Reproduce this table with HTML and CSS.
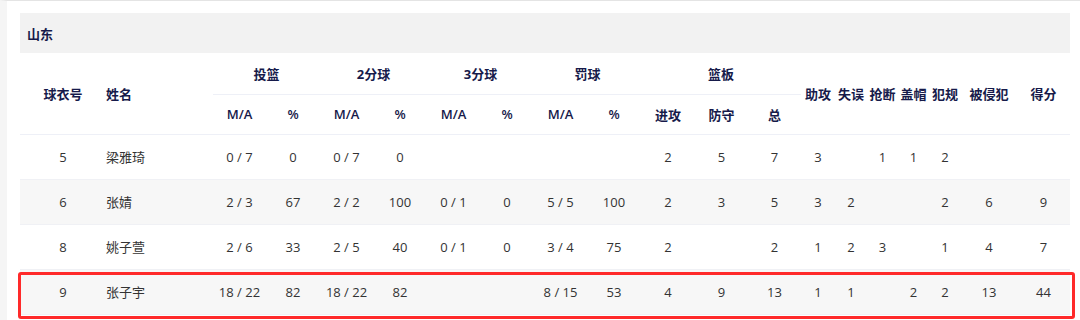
FILE: index.html
```html
<!DOCTYPE html>
<html lang="zh-CN">
<head>
<meta charset="utf-8">
<link rel="stylesheet" href="styles.css">
</head>
<body>
<div class="page">
  <div class="panel">
    <div class="team">山东</div>
    <table class="stats">
      <colgroup>
        <col style="width:86px"><col style="width:107px">
        <col style="width:53px"><col style="width:54px">
        <col style="width:53px"><col style="width:54px">
        <col style="width:53px"><col style="width:54px">
        <col style="width:53px"><col style="width:54px">
        <col style="width:54px"><col style="width:53px"><col style="width:53px">
        <col style="width:34px"><col style="width:32px"><col style="width:31px"><col style="width:31px"><col style="width:32px">
        <col style="width:56px"><col style="width:53px">
      </colgroup>
      <thead>
        <tr class="grp">
          <th rowspan="2">球衣号</th>
          <th rowspan="2" class="name">姓名</th>
          <th colspan="2" class="g">投篮</th>
          <th colspan="2" class="g">2分球</th>
          <th colspan="2" class="g">3分球</th>
          <th colspan="2" class="g">罚球</th>
          <th colspan="3" class="g">篮板</th>
          <th rowspan="2">助攻</th>
          <th rowspan="2">失误</th>
          <th rowspan="2">抢断</th>
          <th rowspan="2">盖帽</th>
          <th rowspan="2">犯规</th>
          <th rowspan="2">被侵犯</th>
          <th rowspan="2">得分</th>
        </tr>
        <tr class="sub">
          <th>M/A</th><th>%</th>
          <th>M/A</th><th>%</th>
          <th>M/A</th><th>%</th>
          <th>M/A</th><th>%</th>
          <th>进攻</th><th>防守</th><th>总</th>
        </tr>
      </thead>
      <tbody>
        <tr>
          <td>5</td><td class="name">梁雅琦</td>
          <td>0 / 7</td><td>0</td><td>0 / 7</td><td>0</td>
          <td></td><td></td><td></td><td></td>
          <td>2</td><td>5</td><td>7</td>
          <td>3</td><td></td><td>1</td><td>1</td><td>2</td><td></td><td></td>
        </tr>
        <tr class="alt">
          <td>6</td><td class="name">张婧</td>
          <td>2 / 3</td><td>67</td><td>2 / 2</td><td>100</td>
          <td>0 / 1</td><td>0</td><td>5 / 5</td><td>100</td>
          <td>2</td><td>3</td><td>5</td>
          <td>3</td><td>2</td><td></td><td></td><td>2</td><td>6</td><td>9</td>
        </tr>
        <tr>
          <td>8</td><td class="name">姚子萱</td>
          <td>2 / 6</td><td>33</td><td>2 / 5</td><td>40</td>
          <td>0 / 1</td><td>0</td><td>3 / 4</td><td>75</td>
          <td>2</td><td></td><td>2</td>
          <td>1</td><td>2</td><td>3</td><td></td><td>1</td><td>4</td><td>7</td>
        </tr>
        <tr class="alt">
          <td>9</td><td class="name">张子宇</td>
          <td>18 / 22</td><td>82</td><td>18 / 22</td><td>82</td>
          <td></td><td></td><td>8 / 15</td><td>53</td>
          <td>4</td><td>9</td><td>13</td>
          <td>1</td><td>1</td><td></td><td>2</td><td>2</td><td>13</td><td>44</td>
        </tr>
      </tbody>
    </table>
  </div>
  <div class="highlight"></div>
</div>
</body>
</html>
```

FILE: styles.css
```css
* { box-sizing: border-box; }
html, body {
  margin: 0;
  padding: 0;
  background: #ffffff;
}
body {
  font-family: "Open Sans", "Noto Sans CJK SC", sans-serif;
  font-size: 13px;
  color: #333333;
}
.page {
  position: relative;
  width: 1080px;
  height: 320px;
  overflow: hidden;
  border-top: 1px solid #e4e4e4;
  border-left: 7px solid #f5f5f5;
  padding: 12px 0 0 13px;
}
.panel {
  width: 1050px;
}
.team {
  height: 40px;
  background: #f2f2f2;
  display: flex;
  align-items: center;
  padding-left: 7px;
  font-family: "Noto Sans CJK SC", sans-serif;
  font-weight: 700;
  color: #161a4a;
  font-size: 13px;
}
.stats {
  width: 1050px;
  table-layout: fixed;
  border-collapse: collapse;
}
.stats th {
  font-family: "Open Sans", "Noto Sans CJK SC", sans-serif;
  font-weight: 700;
  color: #161a4a;
  font-size: 13px;
  text-align: center;
  padding: 0;
  white-space: nowrap;
}
.stats th.name, .stats td.name {
  text-align: left;
}
.stats thead tr.grp { height: 41px; }
.stats thead tr.sub { height: 40px; }
.stats th.g {
  border-bottom: 1px solid #eef0f7;
}
.stats thead tr.sub th { font-weight: 600; }
.stats thead tr.sub th:nth-child(n+9) { font-weight: 700; }
.stats thead {
  border-bottom: 1px solid #eef0f7;
}
.stats td {
  height: 45px;
  padding: 0;
  text-align: center;
  white-space: nowrap;
  font-family: "Open Sans", "Noto Sans CJK SC", sans-serif;
  color: #333333;
}
.stats tbody tr { border-bottom: 1px solid #f0f1f5; }
.stats tbody tr.alt { background: #f7f7f7; }
.highlight {
  position: absolute;
  left: 11px;
  top: 271px;
  width: 1057px;
  height: 47px;
  border: 3px solid #ff2a2a;
  border-radius: 3px;
  pointer-events: none;
}
```
